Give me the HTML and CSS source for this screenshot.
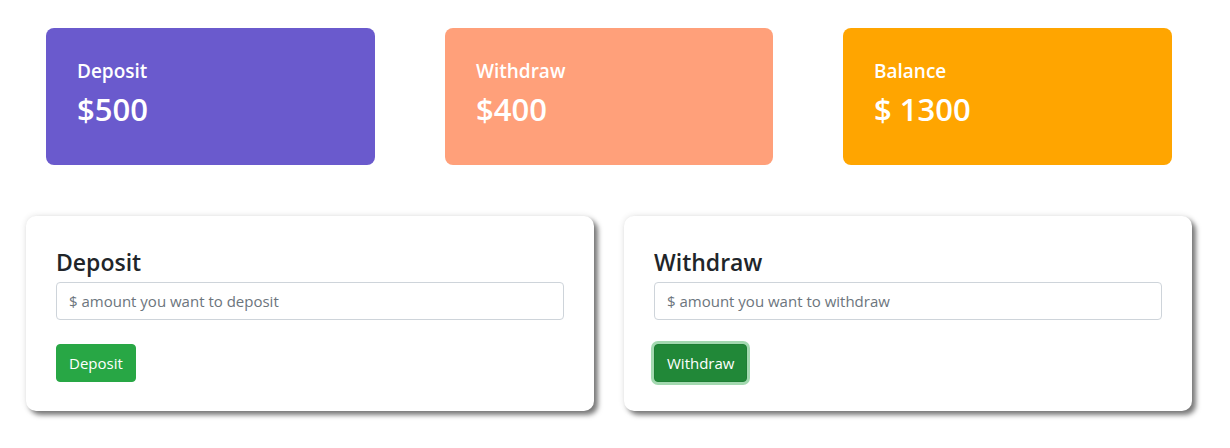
FILE: index.html
```html
<!DOCTYPE html>
<html>
<head>
<meta charset="utf-8">
<link rel="stylesheet" href="styles.css">
</head>
<body>
<div class="stats">
  <div class="stat stat-deposit">
    <h5 class="stat-label">Deposit</h5>
    <h2 class="stat-value">$500</h2>
  </div>
  <div class="stat stat-withdraw">
    <h5 class="stat-label">Withdraw</h5>
    <h2 class="stat-value">$400</h2>
  </div>
  <div class="stat stat-balance">
    <h5 class="stat-label">Balance</h5>
    <h2 class="stat-value">$ 1300</h2>
  </div>
</div>
<div class="forms">
  <div class="panel">
    <h4 class="panel-title">Deposit</h4>
    <input class="field" type="text" placeholder="$ amount you want to deposit">
    <button class="btn">Deposit</button>
  </div>
  <div class="panel">
    <h4 class="panel-title">Withdraw</h4>
    <input class="field" type="text" placeholder="$ amount you want to withdraw">
    <button class="btn btn-focus">Withdraw</button>
  </div>
</div>
</body>
</html>
```
FILE: styles.css
```css
* { box-sizing: border-box; }
html, body { min-height: 448px; }
body {
  margin: 0;
  background: #fff;
  font-family: "Open Sans", "Noto Sans", sans-serif;
  color: #212529;
}
.stats {
  display: flex;
  gap: 70px;
  padding: 28px 0 0 46px;
}
.stat {
  width: 329px;
  height: 137px;
  border-radius: 8px;
  padding: 32px 31px 0;
  color: #fff;
}
.stat-deposit { background: #6a5acd; }
.stat-withdraw { background: #ffa07a; width: 328px; }
.stat-balance { background: #ffa500; }
.stat-label {
  margin: 0 0 8px;
  font-size: 19px;
  font-weight: 600;
  line-height: 1.2;
}
.stat-value {
  margin: 0;
  font-size: 31px;
  font-weight: 600;
  line-height: 1.2;
}
.forms {
  display: flex;
  gap: 30px;
  padding: 51px 0 37px 26px;
}
.panel {
  width: 568px;
  height: 195px;
  background: #fff;
  border-radius: 10px;
  padding: 33px 30px 0;
  box-shadow: 0 0 6px rgba(0,0,0,0.12), 4px 4px 5px rgba(0,0,0,0.5);
  display: flex;
  flex-direction: column;
  align-items: flex-start;
}
.panel-title {
  margin: 0 0 5px;
  font-size: 23px;
  font-weight: 600;
  line-height: 1.2;
}
.field {
  width: 508px;
  height: 38px;
  border: 1px solid #ced4da;
  border-radius: 4px;
  padding: 0 12px;
  font-family: inherit;
  font-size: 15px;
  color: #495057;
  margin-bottom: 24px;
}
.field::placeholder { color: #6c757d; }
.btn {
  height: 38px;
  padding: 0 12px;
  border: 1px solid #28a745;
  border-radius: 4px;
  background: #28a745;
  color: #fff;
  font-family: inherit;
  font-size: 15px;
}
.btn-focus {
  background: #218838;
  border-color: #1e7e34;
  box-shadow: 0 0 0 3px rgba(72,180,97,0.5);
}
```
